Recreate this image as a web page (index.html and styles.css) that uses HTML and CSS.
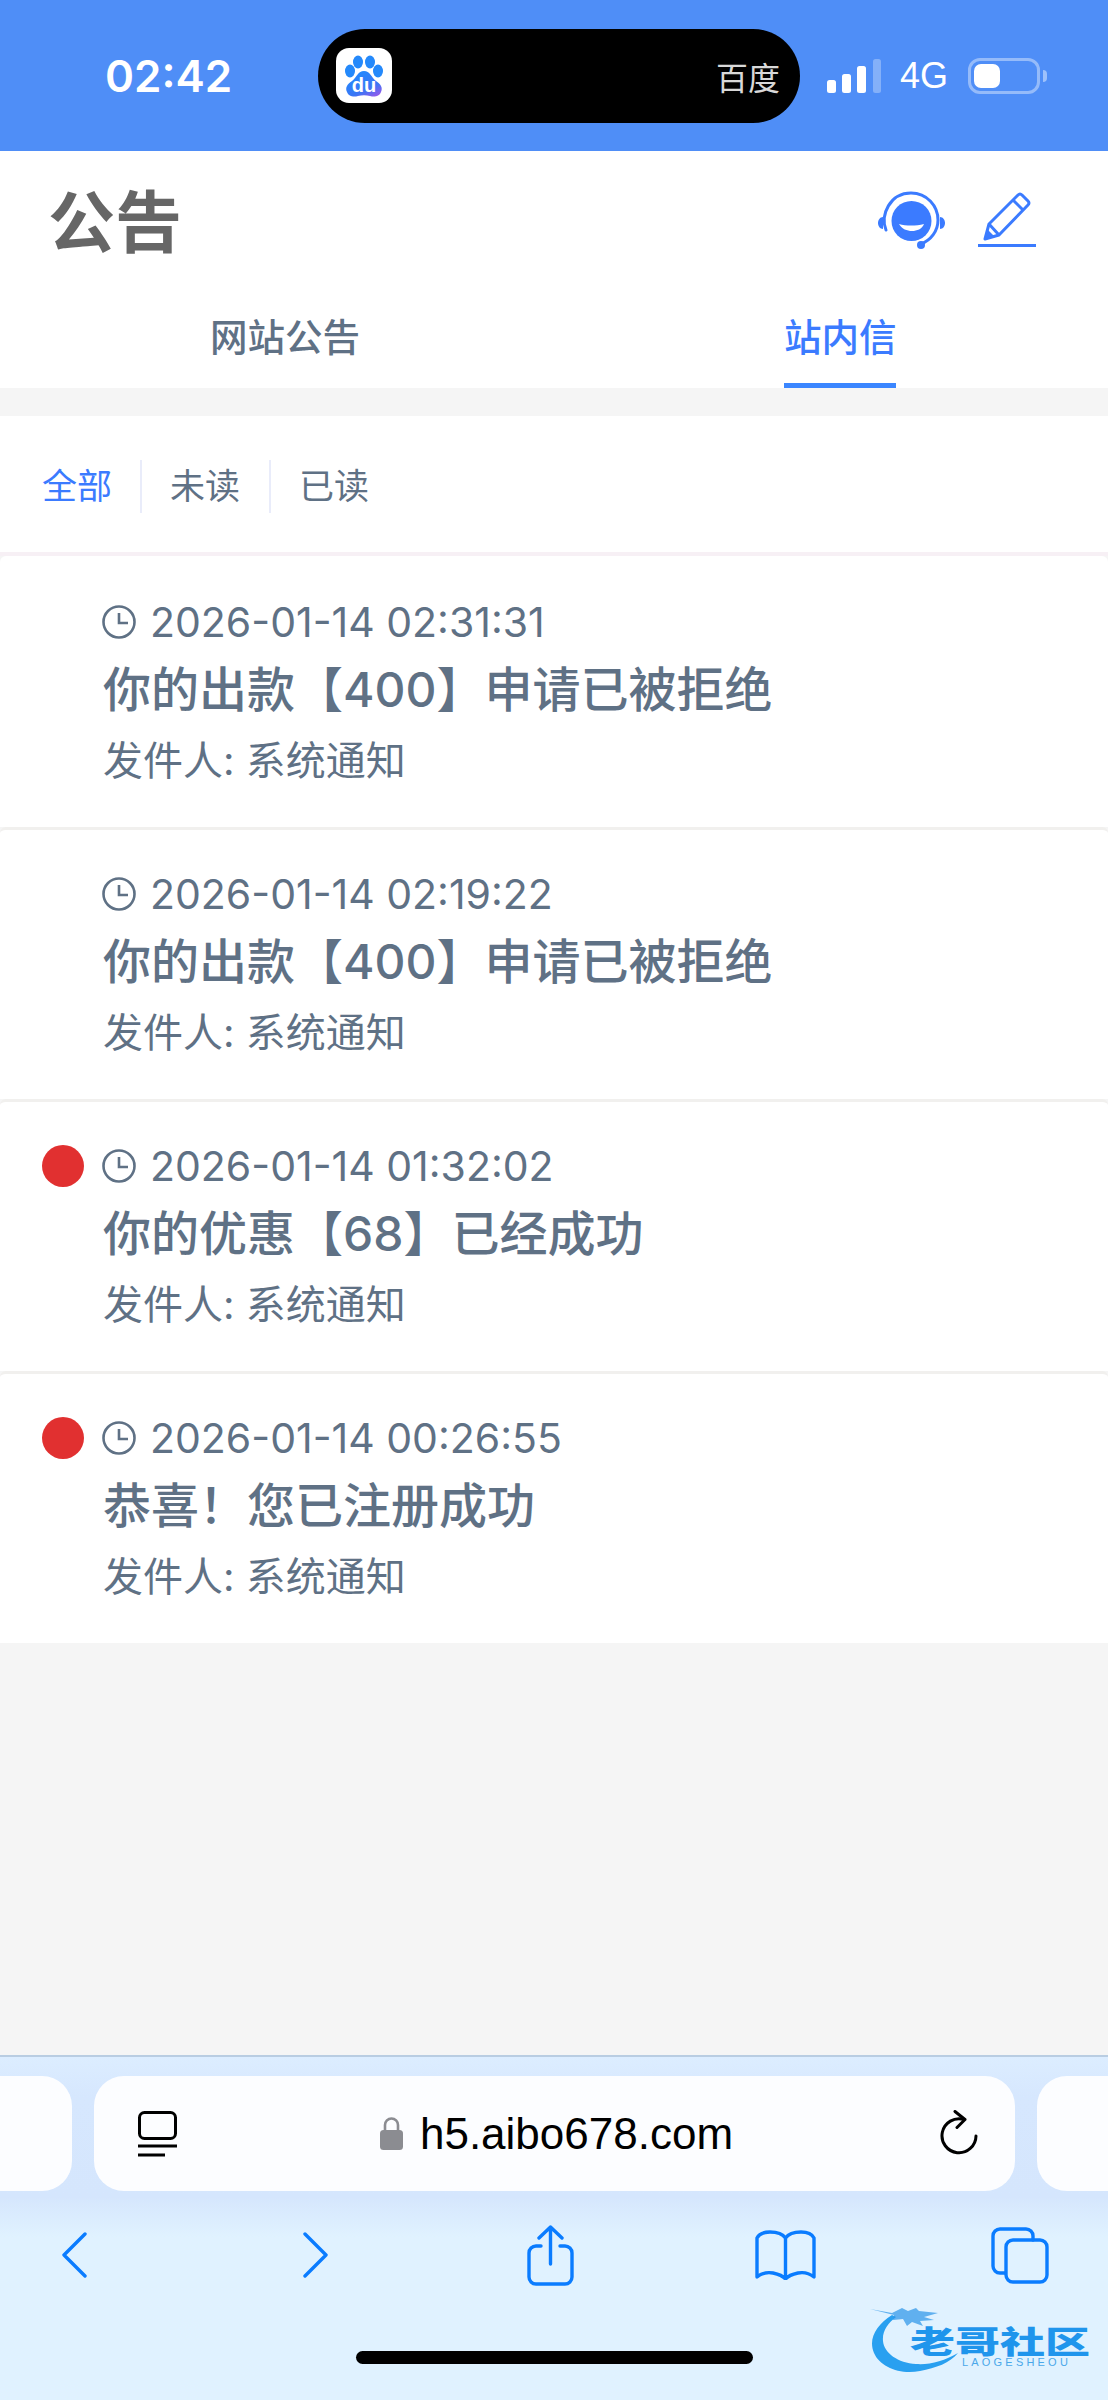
FILE: index.html
```html
<!DOCTYPE html>
<html lang="zh-CN">
    <head>
        <meta charset="UTF-8">
        <title>公告</title>
        <link rel="stylesheet" href="styles.css">
    </head>
    <body>
        <div class="status">
            <span class="time">02:42</span>
            <div class="island">
                <svg class="app-icon" viewBox="0 0 56 55">
                    <defs>
                        <linearGradient id="paw" x1="0.2" y1="0" x2="0.9" y2="1">
                            <stop offset="0" stop-color="#1f8bff"/>
                            <stop offset="0.65" stop-color="#3a76f5"/>
                            <stop offset="1" stop-color="#9a58ea"/>
                        </linearGradient>
                    </defs>
                    <rect width="56" height="55" rx="13" fill="#fff"/>
                    <ellipse cx="14" cy="23" rx="5" ry="6.5" fill="#2489fb"/>
                    <ellipse cx="22" cy="14" rx="5" ry="6.5" fill="#2489fb"/>
                    <ellipse cx="34" cy="14" rx="5" ry="6.5" fill="#2489fb"/>
                    <ellipse cx="42" cy="23" rx="5" ry="6.5" fill="#2489fb"/>
                    <path d="M28 23c6 0 7 6 12 10 5 3 7 7 5 11-2 5-7 5-11 4-4-1-8-1-12 0-4 1-9 1-11-4-2-4 0-8 5-11 5-4 6-10 12-10z" fill="url(#paw)"/>
                    <text x="28" y="44" class="app-du" text-anchor="middle">du</text>
                </svg>
                <span class="island-text">百度</span>
            </div>
            <svg class="signal" viewBox="0 0 54 34">
                <rect x="0" y="21" width="9" height="13" rx="2.5" fill="#fff"/>
                <rect x="15" y="15" width="9" height="19" rx="2.5" fill="#fff"/>
                <rect x="30" y="7" width="9" height="27" rx="2.5" fill="#fff"/>
                <rect x="46" y="0" width="8" height="34" rx="2.5" fill="#fff" fill-opacity="0.3"/>
            </svg>
            <span class="net">4G</span>
            <div class="battery"><div class="battery-fill"></div></div>
            <div class="battery-nub"></div>
        </div>

        <div class="head">
            <h1 class="head-title">公告</h1>
            <div class="head-icons">
                <svg class="icon-service" viewBox="0 0 67 58">
                    <path d="M8 39C2 24 12 2 33 2c16 0 27 13 27 27 0 11-7 20-17 24" fill="none" stroke="#3b7bff" stroke-width="3" stroke-linecap="round"/>
                    <circle cx="33.5" cy="30" r="20" fill="#3b7bff"/>
                    <path d="M21 33c7 2 17 2 25 0-2 5-7 7-12 7s-10-2-13-7z" fill="#fff"/>
                    <path d="M5 26c-3 0-5 3-5 6s2 6 5 6z" fill="#3b7bff"/>
                    <path d="M62 26c3 0 5 3 5 6s-2 6-5 6z" fill="#3b7bff"/>
                    <circle cx="43" cy="54" r="4" fill="#3b7bff"/>
                </svg>
                <svg class="icon-edit" viewBox="0 0 58 58">
                    <path d="M7 48l4-15L40 4q2-2 4 0l6 6q2 2 0 4L21 44z" fill="none" stroke="#3b7bff" stroke-width="3" stroke-linejoin="round"/>
                    <path d="M11 33l10 11M35 9l10 10" fill="none" stroke="#3b7bff" stroke-width="3"/>
                    <path d="M7 48l3-9 6 6z" fill="#3b7bff"/>
                    <rect x="0" y="53" width="58" height="3" fill="#3b7bff"/>
                </svg>
            </div>
        </div>
        <div class="tabs">
            <div class="tab">网站公告</div>
            <div class="tab tab-on">站内信</div>
        </div>

        <div class="main">
            <div class="filter">
                <span class="filter-item filter-on">全部</span>
                <span class="filter-item">未读</span>
                <span class="filter-item">已读</span>
            </div>

            <div class="list">
                <div class="msg">
                    <div class="msg-top">
                        <span class="dot dot-read"></span>
                        <svg class="clock" viewBox="0 0 34 34"><circle cx="17" cy="17" r="15.5"/><path d="M17 8v10h9"/></svg>
                        <span class="msg-date">2026-01-14 02:31:31</span>
                    </div>
                    <div class="msg-title">你的出款【400】申请已被拒绝</div>
                    <div class="msg-from">发件人: 系统通知</div>
                </div>
                <div class="msg">
                    <div class="msg-top">
                        <span class="dot dot-read"></span>
                        <svg class="clock" viewBox="0 0 34 34"><circle cx="17" cy="17" r="15.5"/><path d="M17 8v10h9"/></svg>
                        <span class="msg-date">2026-01-14 02:19:22</span>
                    </div>
                    <div class="msg-title">你的出款【400】申请已被拒绝</div>
                    <div class="msg-from">发件人: 系统通知</div>
                </div>
                <div class="msg">
                    <div class="msg-top">
                        <span class="dot"></span>
                        <svg class="clock" viewBox="0 0 34 34"><circle cx="17" cy="17" r="15.5"/><path d="M17 8v10h9"/></svg>
                        <span class="msg-date">2026-01-14 01:32:02</span>
                    </div>
                    <div class="msg-title">你的优惠【68】已经成功</div>
                    <div class="msg-from">发件人: 系统通知</div>
                </div>
                <div class="msg">
                    <div class="msg-top">
                        <span class="dot"></span>
                        <svg class="clock" viewBox="0 0 34 34"><circle cx="17" cy="17" r="15.5"/><path d="M17 8v10h9"/></svg>
                        <span class="msg-date">2026-01-14 00:26:55</span>
                    </div>
                    <div class="msg-title">恭喜！您已注册成功</div>
                    <div class="msg-from">发件人: 系统通知</div>
                </div>
            </div>
        </div>

        <div class="browser">
            <div class="url-row">
                <div class="url-side url-left"></div>
                <div class="url-box">
                    <svg class="icon-reader" viewBox="0 0 39 46">
                        <rect x="1.500" y="1.500" width="36" height="26" rx="5" fill="none" stroke="#000" stroke-width="3"/>
                        <path d="M0 35h39M0 44h27" stroke="#000" stroke-width="3.2" fill="none"/>
                    </svg>
                    <div class="url-text">
                        <svg class="icon-lock" viewBox="0 0 23 33">
                            <path d="M5 15V8a6.500 6.500 0 0 1 13 0v7" fill="none" stroke="#8b8c91" stroke-width="2.6"/>
                            <rect x="0" y="13" width="23" height="20" rx="3.500" fill="#8b8c91"/>
                        </svg>
                        <span>h5.aibo678.com</span>
                    </div>
                    <svg class="icon-reload" viewBox="0 0 38 47">
                        <path d="M24 9.500A17 17 0 1 0 36 26" fill="none" stroke="#000" stroke-width="3" stroke-linecap="round"/>
                        <path d="M15 1.500l10 8-8 8" fill="none" stroke="#000" stroke-width="3" stroke-linecap="round" stroke-linejoin="round"/>
                    </svg>
                </div>
                <div class="url-side url-right"></div>
            </div>
            <div class="nav-row">
                <svg class="icon-back" viewBox="0 0 26 46"><path d="M24 2L3 23l21 21"/></svg>
                <svg class="icon-back" viewBox="0 0 26 46"><path d="M2 2l21 21L2 44"/></svg>
                <svg class="icon-share" viewBox="0 0 47 61">
                    <path d="M23.500 2v37M12 13L23.500 2 35 13"/>
                    <path d="M14 21H9a7 7 0 0 0-7 7v24a7 7 0 0 0 7 7h29a7 7 0 0 0 7-7V28a7 7 0 0 0-7-7h-5"/>
                </svg>
                <svg class="icon-book" viewBox="0 0 61 50">
                    <path d="M30.500 8C27 3 21 2 15 2 9 2 4 4 2 8v39c5-4 11-5 16-4 5 1 10 3 12.500 6 2.500-3 7.500-5 12.500-6 5-1 11 0 16 4V8c-2-4-7-6-13-6-6 0-12 1-15.500 6v40"/>
                </svg>
                <svg class="icon-tabs" viewBox="0 0 58 57">
                    <path d="M14 46H9a7 7 0 0 1-7-7V9a7 7 0 0 1 7-7h26a7 7 0 0 1 7 7v4"/>
                    <rect x="15" y="13" width="41" height="42" rx="7"/>
                </svg>
            </div>
            <div class="home-bar"></div>

            <div class="mark">
                <svg class="mark-dragon" viewBox="0 0 110 70">
                    <path d="M22 12C6 22-2 36 4 50c6 14 26 22 46 18 16-3 30-8 38-18-14 8-28 12-42 11C28 60 14 50 13 38c-1-10 5-18 13-24z" fill="#29a0f0"/>
                    <path d="M0 6l22 4 10-5 6 3 8-3 3 3 19 2-14 4 10 3-14 1 3 5-11-4-5 4-4-7-10 1 1-5z" fill="#2a94e8" fill-opacity="0.7"/>
                </svg>
                <span class="mark-name">老哥社区</span>
                <span class="mark-sub">LAOGESHEOU</span>
            </div>
        </div>
    </body>
</html>
```

FILE: styles.css
```css
* {
    box-sizing: border-box;
}

body {
    margin: 0;
    width: 1108px;
    height: 2400px;
    display: flex;
    flex-direction: column;
    overflow: hidden;
    background: #f5f5f5;
    font-family: Inter, "Noto Sans CJK SC", "Liberation Sans", sans-serif;
}

/* status bar */
.status {
    height: 151px;
    flex: none;
    display: flex;
    align-items: center;
    padding-left: 105px;
    background: #4f8ef7;
    color: #fff;
}

.time {
    width: 127px;
    font-size: 44px;
    font-weight: 600;
    white-space: nowrap;
}

.island {
    width: 482px;
    height: 94px;
    margin-left: 86px;
    padding: 0 20px 0 18px;
    display: flex;
    align-items: center;
    justify-content: space-between;
    background: #000;
    border-radius: 47px;
}

.app-icon {
    width: 56px;
    height: 55px;
}

.app-du {
    font-size: 20px;
    font-weight: 700;
    fill: #fff;
    font-family: "Liberation Sans", sans-serif;
}

.island-text {
    font-size: 32px;
    color: #d8d8d8;
}

.signal {
    width: 54px;
    height: 34px;
    margin-left: 27px;
}

.net {
    width: 48px;
    margin-left: 19px;
    font-size: 36px;
    font-family: "Liberation Sans", sans-serif;
}

.battery {
    width: 72px;
    height: 36px;
    margin-left: 20px;
    padding: 3px;
    border: 3px solid rgba(255, 255, 255, 0.4);
    border-radius: 12px;
}

.battery-fill {
    width: 26px;
    height: 24px;
    background: #fff;
    border-radius: 7px;
}

.battery-nub {
    width: 4px;
    height: 12px;
    margin-left: 3px;
    background: rgba(255, 255, 255, 0.45);
    border-radius: 0 6px 6px 0;
}

/* header */
.head {
    height: 142px;
    flex: none;
    display: flex;
    align-items: center;
    justify-content: space-between;
    padding: 0 72px 4px 48px;
    background: #fff;
}

.head-title {
    margin: 0;
    padding-top: 6px;
    font-size: 67px;
    font-weight: 700;
    line-height: 80px;
    color: #666;
}

.head-icons {
    display: flex;
    align-items: center;
    gap: 33px;
}

.icon-service {
    width: 67px;
    height: 58px;
}

.icon-edit {
    width: 58px;
    height: 58px;
}

.tabs {
    height: 95px;
    flex: none;
    display: flex;
    align-items: flex-start;
    background: #fff;
}

.tab {
    width: 570px;
    font-size: 37.5px;
    font-weight: 500;
    line-height: 89px;
    text-align: center;
    color: #5f7185;
}

.tab-on {
    color: #3b7bff;
    width: 112px;
    margin-left: 214px;
    height: 95px;
    border-bottom: 5px solid #3b86ff;
    white-space: nowrap;
}

/* list */
.main {
    flex: 1;
    padding-top: 28px;
    background: #f5f5f5;
}

.filter {
    height: 140px;
    padding-top: 44px;
    padding-left: 42px;
    display: flex;
    align-items: flex-start;
    background: #fff;
    border-bottom: 4px solid #f7f0f5;
}

.filter-item {
    height: 53px;
    width: 129px;
    padding-right: 30px;
    font-size: 35px;
    line-height: 53px;
    color: #5f7185;
    border-right: 2px solid #e9ecfa;
    white-space: nowrap;
}

.filter-item:first-child {
    width: 100px;
}

.filter-item + .filter-item {
    padding-left: 28px;
}

.filter-item:last-child {
    border-right: 0;
}

.filter-on {
    color: #3b7bff;
}

.msg {
    height: 272px;
    padding: 39px 0 0 42px;
    background: #fff;
    border-top: 3px solid #f1f0ee;
    border-radius: 6px 6px 0 0;
}

.msg:first-child {
    height: 271px;
    padding-top: 41px;
    border-top: 0;
}

.msg-top {
    height: 50px;
    display: flex;
    align-items: center;
}

.dot {
    width: 42px;
    height: 42px;
    flex: none;
    border-radius: 50%;
    background: #e13030;
}

.dot-read {
    visibility: hidden;
}

.clock {
    width: 34px;
    height: 34px;
    margin-left: 18px;
    fill: none;
    stroke: #5f7185;
    stroke-width: 2.6;
}

.msg-date {
    margin-left: 14px;
    font-size: 41px;
    line-height: 50px;
    color: #5f7185;
    white-space: nowrap;
}

.msg-title {
    margin-top: 13px;
    padding-left: 61px;
    font-size: 48px;
    font-weight: 500;
    line-height: 60px;
    color: #5f7185;
    white-space: nowrap;
}

.msg-from {
    margin-top: 16px;
    padding-left: 61px;
    font-size: 40px;
    line-height: 50px;
    color: #5f7185;
    white-space: nowrap;
}

/* safari bars */
.browser {
    position: relative;
    height: 345px;
    flex: none;
    background: linear-gradient(#dcedff 0, #d6e7fe 40px, #d5e6fd 140px, #e0f2ff 180px);
    border-top: 2px solid #b9cde2;
}

.url-row {
    display: grid;
    grid-template-columns: 72px 921px 71px;
    column-gap: 22px;
    height: 115px;
    margin-top: 19px;
}

.url-side {
    background: #fcfdff;
}

.url-left {
    border-radius: 0 30px 30px 0;
}

.url-right {
    border-radius: 30px 0 0 30px;
}

.url-box {
    display: flex;
    align-items: center;
    justify-content: space-between;
    padding: 0 37px 0 44px;
    background: #fcfdff;
    border-radius: 30px;
}

.icon-reader {
    width: 39px;
    height: 46px;
}

.icon-reload {
    width: 38px;
    height: 47px;
}

.url-text {
    display: flex;
    align-items: center;
    gap: 17px;
    margin-right: 4px;
    font-size: 44px;
    color: #000;
    font-family: "Liberation Sans", sans-serif;
}

.icon-lock {
    width: 23px;
    height: 33px;
}

.nav-row {
    display: grid;
    grid-template-columns: 148px 336px 132px 338px 132px;
    justify-items: center;
    align-items: center;
    height: 128px;
}

.nav-row svg {
    fill: none;
    stroke: #0a7cff;
    stroke-width: 3.4;
    stroke-linecap: round;
    stroke-linejoin: round;
}

.icon-back {
    width: 26px;
    height: 46px;
}

.icon-share {
    width: 47px;
    height: 61px;
}

.icon-book {
    width: 61px;
    height: 50px;
}

.icon-tabs {
    width: 58px;
    height: 57px;
}

.home-bar {
    width: 397px;
    height: 13px;
    margin: 32px 0 0 356px;
    background: #000;
    border-radius: 7px;
}

/* watermark sits on top of the bar */
.mark {
    position: absolute;
    left: 870px;
    top: 246px;
    width: 222px;
    height: 72px;
}

.mark-dragon {
    position: absolute;
    left: 0;
    top: 0;
    width: 110px;
    height: 70px;
}

.mark-name {
    position: absolute;
    left: 40px;
    top: 14px;
    font-size: 45px;
    line-height: 50px;
    font-weight: 900;
    color: #1f95ec;
    white-space: nowrap;
    transform: scaleY(0.68);
}

.mark-sub {
    position: absolute;
    left: 92px;
    top: 53px;
    font-size: 11px;
    line-height: 12px;
    letter-spacing: 3.2px;
    color: #4aa8ea;
    font-family: "Liberation Sans", sans-serif;
    white-space: nowrap;
}
```
